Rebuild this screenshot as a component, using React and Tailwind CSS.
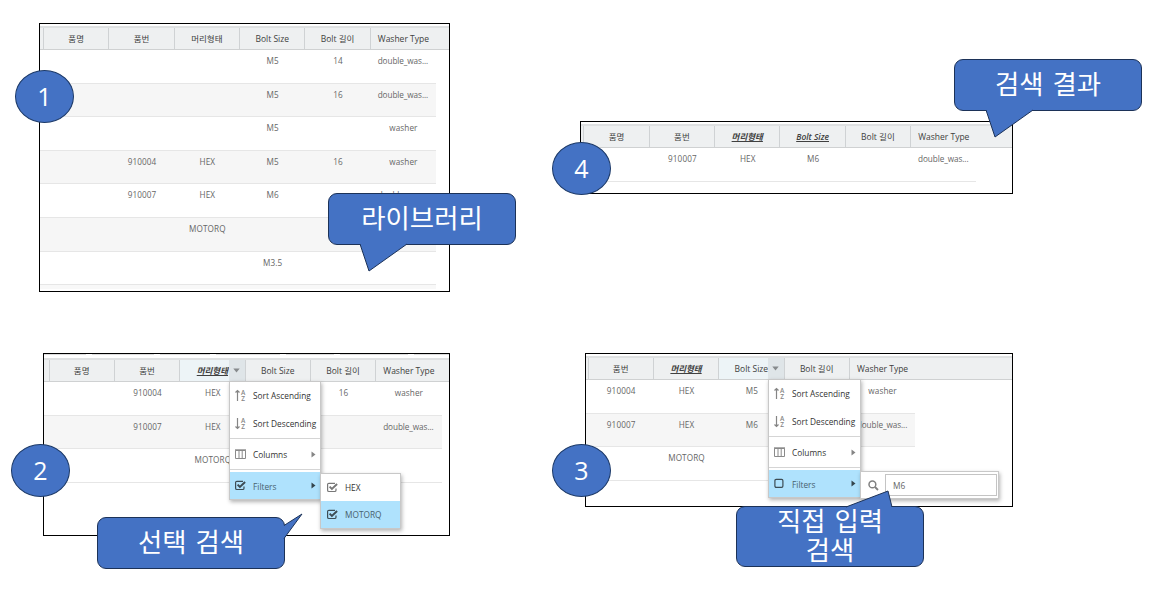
import React from "react";
import clsx from "clsx";

const libraryRows = [
  ["", "", "", "M5", "14", "double_was..."],
  ["", "", "", "M5", "16", "double_was..."],
  ["", "", "", "M5", "", "washer"],
  ["", "910004", "HEX", "M5", "16", "washer"],
  ["", "910007", "HEX", "M6", "", "double_was..."],
  ["", "", "MOTORQ", "", "", ""],
  ["", "", "", "M3.5", "", ""],
];

const selectRows = [
  ["", "910004", "HEX", "", "16", "washer"],
  ["", "910007", "HEX", "", "", "double_was..."],
  ["", "", "MOTORQ", "", "", ""],
];

const inputRows = [
  ["910004", "HEX", "M5", "", "washer"],
  ["910007", "HEX", "M6", "", "double_was..."],
  ["", "MOTORQ", "", "", ""],
];

const resultRows = [["", "910007", "HEX", "M6", "", "double_was..."]];

const allColumns = ["품명", "품번", "머리형태", "Bolt Size", "Bolt 길이", "Washer Type"];

const Table = ({ columns, rows, filtered = [], open, stub }) => (
  <div className="w-full">
    <div className="flex h-[24px] border-t-2 border-b border-t-[#dfe1e2] border-b-[#cfd1d2] bg-[#eef0f1] text-[8.5px] leading-[21px] text-[#404040]">
      <div className={clsx("shrink-0 border-r border-[#cfd2d4]", stub)} />
      {columns.map((name, i) => (
        <div
          key={name}
          className={clsx(
            "relative w-[65.35px] shrink-0 whitespace-nowrap text-center",
            i < columns.length - 1 && "border-r border-[#cfd2d4]",
            open === name && "bg-[#edf4f7]"
          )}
        >
          <span className={clsx(filtered.includes(name) && "font-semibold italic underline underline-offset-1")}>
            {name}
          </span>
          {open === name && (
            <div className="absolute top-0 right-0 flex h-full w-4 items-center justify-center bg-[#dfe5e8]">
              <svg width="7" height="5" viewBox="0 0 7 5">
                <path d="M0.3 0.4h6.4L3.5 4.4z" fill="#868a8c" />
              </svg>
            </div>
          )}
        </div>
      ))}
    </div>
    {rows.map((row, i) => (
      <div
        key={i}
        className={clsx("flex h-[33.6px] w-fit border-b border-[#e6e6e6]", i % 2 === 1 && "bg-[#f6f6f6]")}
      >
        <div className={clsx("shrink-0", stub)} />
        {row.map((cell, j) => (
          <div
            key={j}
            className={clsx(
              "w-[65.35px] shrink-0 whitespace-nowrap pt-1 text-center text-[8.2px] leading-[14px] text-[#666]",
              cell.length > 8 ? "pr-px tracking-[-0.08px]" : "tracking-[0.1px]"
            )}
          >
            {cell}
          </div>
        ))}
      </div>
    ))}
  </div>
);

const SortIcon = ({ down }) => (
  <svg width="12" height="13" viewBox="0 0 12 13" fill="none">
    {down ? (
      <path d="M2.5 1v10.5M0.5 9.5l2 2 2-2" stroke="#858585" strokeWidth="1.2" />
    ) : (
      <path d="M2.5 12V1.5M0.5 3.5l2-2 2 2" stroke="#858585" strokeWidth="1.2" />
    )}
    <text x="6" y="5.6" fontSize="6.5" fontWeight="600" fill="#858585">A</text>
    <text x="6.2" y="11.8" fontSize="6.5" fontWeight="600" fill="#858585">Z</text>
  </svg>
);

const ColumnsIcon = () => (
  <svg width="12" height="12" viewBox="0 0 12 12" fill="none" stroke="#8a8a8a">
    <path d="M0.5 2.5h10v8h-10zM4 2.5v8M7.2 2.5v8" />
    <path d="M0 2h11" strokeWidth="1.4" />
  </svg>
);

const CheckIcon = ({ checked = true, color = "#3d4c54" }) => (
  <svg width="12" height="12" viewBox="0 0 12 12" fill="none" stroke={color}>
    {checked ? (
      <>
        <path d="M9 6.5V8.2Q9 9.5 7.7 9.5H1.9Q0.6 9.5 0.6 8.2V2.6Q0.6 1.3 1.9 1.3H8" strokeWidth="1.2" />
        <path d="M2.6 4.6l2.3 2.4 5.2-5" strokeWidth="1.9" />
      </>
    ) : (
      <rect x="0.9" y="1.4" width="8" height="8" rx="1.3" strokeWidth="1.2" />
    )}
  </svg>
);

const SearchIcon = () => (
  <svg width="11" height="11" viewBox="0 0 11 11" fill="none" stroke="#808080">
    <circle cx="4.4" cy="4.4" r="3.4" strokeWidth="1.5" />
    <path d="M7 7l3 3" strokeWidth="1.8" />
  </svg>
);

const Arrow = ({ color }) => (
  <svg className="mr-1 ml-auto" width="5" height="7" viewBox="0 0 5 7">
    <path d="M0.5 0.5v6l4-3z" fill={color} />
  </svg>
);

const Item = ({ icon, label, className, children }) => (
  <div className={clsx("flex items-center pl-[5px]", className)}>
    <div className="w-[18px] shrink-0">{icon}</div>
    <span className="pt-px whitespace-nowrap">{label}</span>
    {children}
  </div>
);

const FilterMenu = ({ checked, className, children }) => (
  <div
    className={clsx(
      "absolute z-10 border border-[#c8c8c8] bg-white text-[8.3px] leading-3 text-[#333] shadow-[1px_2px_4px_rgba(0,0,0,0.3)]",
      className
    )}
  >
    <Item className="h-[27px]" icon={<SortIcon />} label="Sort Ascending" />
    <Item className="h-[29px]" icon={<SortIcon down />} label="Sort Descending" />
    <Item className="h-8 border-y border-[#d5d5d5] [&>span]:pt-[2px]" icon={<ColumnsIcon />} label="Columns">
      <Arrow color="#858585" />
    </Item>
    <Item
      className="mt-[2px] h-[27px] bg-[#afe2fd] text-[#48616e] [&>span]:pt-[2px]"
      icon={<CheckIcon checked={checked} />}
      label="Filters"
    >
      <Arrow color="#34444c" />
    </Item>
    {children}
  </div>
);

const Badge = ({ n, className }) => (
  <div
    className={clsx(
      "absolute z-20 flex h-[53px] w-[59px] items-center justify-center rounded-[50%] border border-[#1d3a68] bg-[#4472c4] pb-px text-[25px] leading-none text-white",
      className
    )}
  >
    {n}
  </div>
);

const Callout = ({ className, tail, children }) => (
  <div
    className={clsx(
      "absolute z-20 flex w-[188px] items-center justify-center rounded-[9px] border border-[#1c3258] bg-[#4472c4] text-center text-[26.4px] leading-[29px] font-normal [word-spacing:2px] text-white",
      className
    )}
  >
    <svg className="absolute -top-px -left-px overflow-visible" width="188" height="52" viewBox="0 0 188 52">
      <path d={tail} fill="#4472c4" stroke="#1c3258" strokeLinejoin="round" />
    </svg>
    <div className="relative pb-px">{children}</div>
  </div>
);

const Panel = ({ className, children }) => (
  <section className={clsx("relative border border-black bg-white", className)}>{children}</section>
);

const App = () => {
  return (
    <main className="flex h-[607px] w-[1150px] overflow-hidden bg-white font-['Open_Sans','Noto_Sans_CJK_KR',sans-serif]">
      <div className="w-[580px] shrink-0 pt-[23px] pl-[39px]">
        <Panel className="h-[269px] w-[411px] pt-[2px]">
          <Table columns={allColumns} rows={libraryRows} stub="w-[4px]" />
          <div className="h-1 w-[396px] bg-[#f8f8f8]" />
          <Badge n="1" className="top-[46px] -left-[25px]" />
          <Callout className="top-[169px] left-[288px] h-[52px]" tail="M32 51L41 78L79 51">
            라이브러리
          </Callout>
        </Panel>

        <Panel className="mt-[61px] ml-1 h-[183px] w-[407px]">
          {/* bottom edge of the toolbar above the grid */}
          <div className="flex h-1 gap-[6px] overflow-hidden">
            <div className="h-px w-[42px] bg-[#ddd]" />
            <div className="h-px w-[62px] bg-[#ddd]" />
            <div className="h-px w-[50px] bg-[#ddd]" />
            <div className="h-px w-[64px] bg-[#ddd]" />
            <div className="h-px w-[48px] bg-[#ddd]" />
            <div className="h-px w-[68px] bg-[#ddd]" />
            <div className="h-px flex-1 bg-[#ddd]" />
          </div>
          <Table columns={allColumns} rows={selectRows} filtered={["머리형태"]} open="머리형태" stub="w-[5.5px]" />
          <FilterMenu checked className="top-[27px] left-[185px] w-[92px]">
            <div className="absolute top-[91px] left-[90px] w-[81px] border border-[#c8c8c8] bg-white shadow-[1px_2px_4px_rgba(0,0,0,0.3)]">
              <Item className="h-[27px] pl-[6px]" icon={<CheckIcon color="#777" />} label="HEX" />
              <Item
                className="h-[27px] bg-[#afe2fd] pl-[6px] text-[#48616e]"
                icon={<CheckIcon />}
                label="MOTORQ"
              />
            </div>
          </FilterMenu>
          <Badge n="2" className="top-[90px] -left-[33px]" />
          <Callout className="top-[163px] left-[53px] h-[52px]" tail="M187 8.5L205 -3L187 21.5">
            선택 검색
          </Callout>
        </Panel>
      </div>

      <div className="pt-[121px]">
        <Panel className="h-[73px] w-[433px] pt-[2px]">
          <Table columns={allColumns} rows={resultRows} filtered={["머리형태", "Bolt Size"]} stub="w-[3.4px]" />
          <Badge n="4" className="top-[20px] -left-[29px]" />
          <Callout className="-top-[63px] left-[373px] h-[52px]" tail="M32 51L41 78L79 51">
            검색 결과
          </Callout>
        </Panel>

        <Panel className="mt-[159px] ml-[5px] h-[154px] w-[428px] pt-[2px]">
          <Table
            columns={allColumns.slice(1)}
            rows={inputRows}
            filtered={["머리형태"]}
            open="Bolt Size"
            stub="w-[2.5px]"
          />
          <FilterMenu checked={false} className="top-[25px] left-[182px] w-[93px]">
            <div className="absolute top-[91px] left-[91px] flex h-[28px] w-[139px] items-center border border-[#c8c8c8] bg-white pl-[7px] shadow-[1px_2px_4px_rgba(0,0,0,0.3)]">
              <SearchIcon />
              <div className="ml-[6px] h-[22px] w-[112px] border border-[#c4c4c4] pl-[7px] leading-[22px] text-[#666]">
                M6
              </div>
            </div>
          </FilterMenu>
          <Badge n="3" className="top-[90px] -left-[34px]" />
          <Callout className="top-[152px] left-[150px] h-[61px]" tail="M110 1L152 -15L156 1">
            직접 입력
            <br />
            검색
          </Callout>
        </Panel>
      </div>
    </main>
  );
};

export default App;
